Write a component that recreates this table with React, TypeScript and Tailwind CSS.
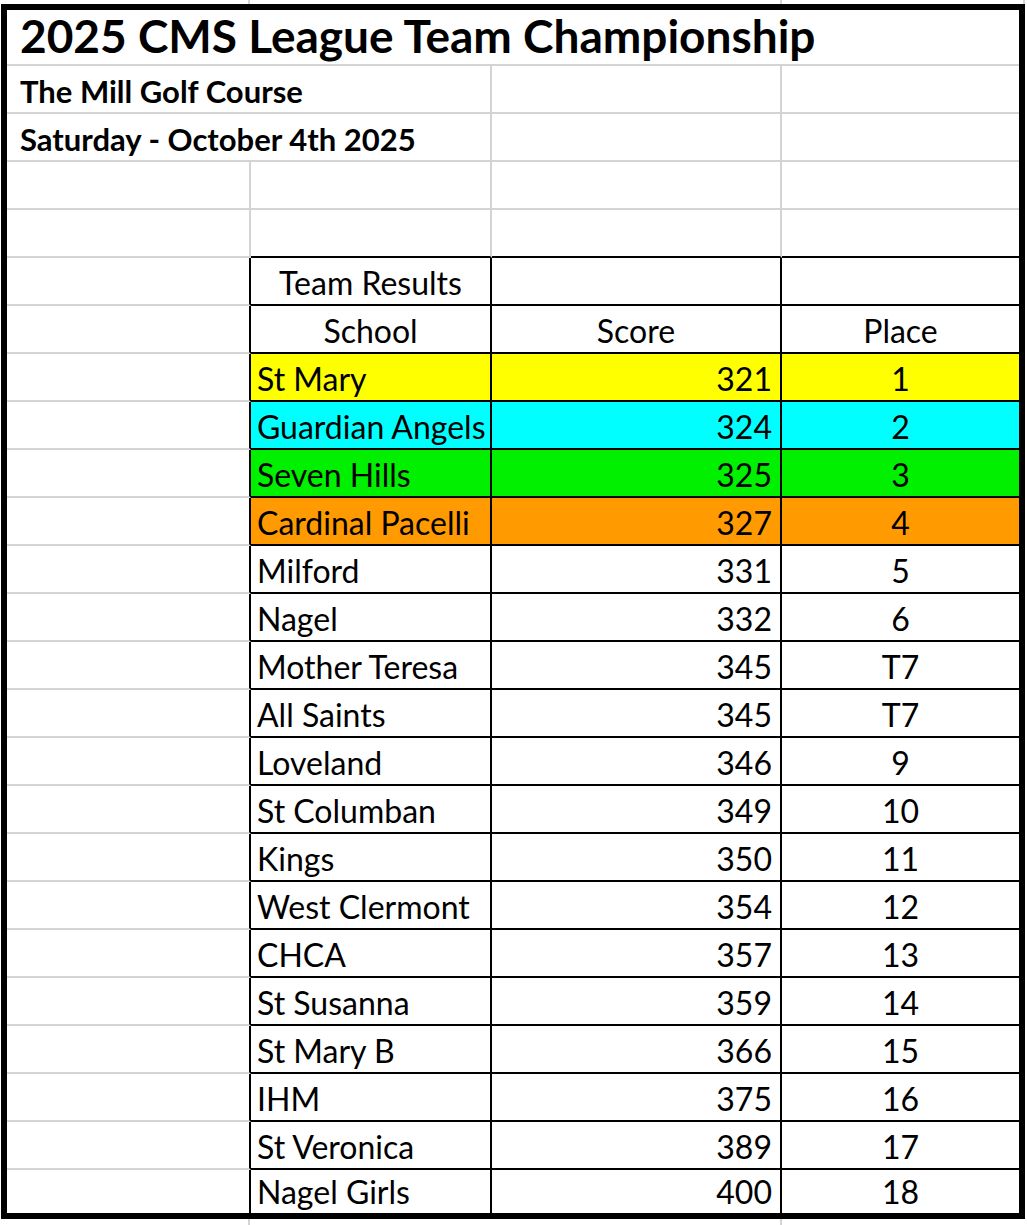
import { FC } from "react";

type Team = { school: string; score: number; place: string; bg?: string };

const teams: Team[] = [
  { school: "St Mary", score: 321, place: "1", bg: "bg-[#ffff00]" },
  { school: "Guardian Angels", score: 324, place: "2", bg: "bg-[#00ffff]" },
  { school: "Seven Hills", score: 325, place: "3", bg: "bg-[#00f000]" },
  { school: "Cardinal Pacelli", score: 327, place: "4", bg: "bg-[#ff9a00]" },
  { school: "Milford", score: 331, place: "5" },
  { school: "Nagel", score: 332, place: "6" },
  { school: "Mother Teresa", score: 345, place: "T7" },
  { school: "All Saints", score: 345, place: "T7" },
  { school: "Loveland", score: 346, place: "9" },
  { school: "St Columban", score: 349, place: "10" },
  { school: "Kings", score: 350, place: "11" },
  { school: "West Clermont", score: 354, place: "12" },
  { school: "CHCA", score: 357, place: "13" },
  { school: "St Susanna", score: 359, place: "14" },
  { school: "St Mary B", score: 366, place: "15" },
  { school: "IHM", score: 375, place: "16" },
  { school: "St Veronica", score: 389, place: "17" },
  { school: "Nagel Girls", score: 400, place: "18" },
];

// empty sheet row, gray gridlines only
const SheetRow: FC<{ gridA?: boolean; gridB?: boolean }> = ({ gridA, gridB }) => (
  <div className="flex h-[48px]">
    <div
      className={`w-[244px] border-b-2 border-[#d4d4d4] ${gridA ? "border-r-2" : ""}`}
    />
    <div
      className={`w-[241px] border-b-2 border-[#d4d4d4] ${gridB ? "border-r-2" : ""}`}
    />
    <div className="w-[290px] border-b-2 border-r-2 border-[#d4d4d4]" />
    <div className="w-[237px] border-b-2 border-[#d4d4d4]" />
  </div>
);

const TableRow: FC<{
  name?: string;
  score?: string;
  place?: string;
  bg?: string;
  center?: boolean;
  last?: boolean;
}> = ({ name, score, place, bg = "bg-white", center, last }) => (
  <div className={`flex ${last ? "h-[43px]" : "h-[48px]"} text-[32px] leading-none`}>
    <div
      className={`w-[244px] border-r-2 border-r-black ${last ? "" : "border-b-2 border-b-[#d4d4d4]"}`}
    />
    <div
      className={`flex w-[241px] items-center border-r-2 border-black ${last ? "" : "border-b-2 pt-[3px]"} ${bg} ${center ? "justify-center" : "pl-[6px]"}`}
    >
      <span className="whitespace-nowrap">{name}</span>
    </div>
    <div
      className={`flex w-[290px] items-center border-r-2 border-black ${last ? "" : "border-b-2 pt-[3px]"} ${bg} ${center ? "justify-center" : "justify-end pr-[8px]"}`}
    >
      <span>{score}</span>
    </div>
    <div
      className={`flex w-[237px] items-center justify-center border-black ${last ? "" : "border-b-2 pt-[3px]"} ${bg}`}
    >
      <span>{place}</span>
    </div>
  </div>
);

export default function App() {
  return (
    <div className="flex h-[1225px] w-[1027px] flex-col overflow-hidden bg-white font-['Lato',sans-serif] text-black">
      <div className="flex h-[4px] shrink-0">
        <div className="w-[250px] border-r-2 border-[#d4d4d4]" />
        <div className="w-[532px] border-r-2 border-[#d4d4d4]" />
        <div className="w-[243px] border-r-2 border-[#d4d4d4]" />
      </div>
      <div className="ml-[1px] h-[1215px] w-[1024px] shrink-0 border-[6px] border-black">
        <div className="flex h-[56px] items-end border-b-2 border-[#d4d4d4] pb-[5px] pl-[13px] text-[46px] font-bold leading-none">
          <span className="whitespace-nowrap">2025 CMS League Team Championship</span>
        </div>
        <div className="flex h-[48px]">
          <div className="flex w-[485px] items-end border-b-2 border-r-2 border-[#d4d4d4] pb-[5px] pl-[13px] text-[31px] font-bold leading-none">
            <span className="whitespace-nowrap">The Mill Golf Course</span>
          </div>
          <div className="w-[290px] border-b-2 border-r-2 border-[#d4d4d4]" />
          <div className="w-[237px] border-b-2 border-[#d4d4d4]" />
        </div>
        <div className="flex h-[48px]">
          <div className="flex w-[485px] items-end border-b-2 border-r-2 border-[#d4d4d4] pb-[5px] pl-[13px] text-[31px] font-bold leading-none">
            <span className="whitespace-nowrap">Saturday - October 4th 2025</span>
          </div>
          <div className="w-[290px] border-b-2 border-r-2 border-[#d4d4d4]" />
          <div className="w-[237px] border-b-2 border-[#d4d4d4]" />
        </div>
        <SheetRow gridA gridB />
        <div className="flex h-[48px]">
          <div className="w-[244px] border-b-2 border-r-2 border-[#d4d4d4]" />
          <div className="w-[241px] border-b-2 border-r-2 border-b-black border-r-[#d4d4d4]" />
          <div className="w-[290px] border-b-2 border-r-2 border-b-black border-r-[#d4d4d4]" />
          <div className="w-[237px] border-b-2 border-black" />
        </div>
        <TableRow name="Team Results" center />
        <TableRow name="School" score="Score" place="Place" center />
        {teams.map((t, i) => (
          <TableRow
            key={t.school}
            name={t.school}
            score={String(t.score)}
            place={t.place}
            bg={t.bg}
            last={i === teams.length - 1}
          />
        ))}
      </div>
      <div className="flex h-[6px] shrink-0">
        <div className="w-[250px] border-r-2 border-[#d4d4d4]" />
        <div className="w-[532px] border-r-2 border-[#d4d4d4]" />
      </div>
    </div>
  );
}
